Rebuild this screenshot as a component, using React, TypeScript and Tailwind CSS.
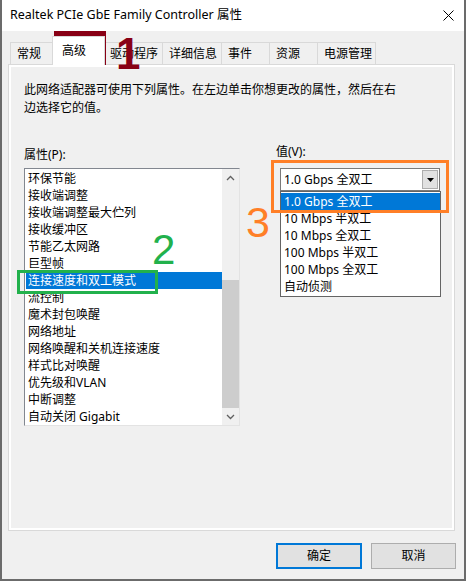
const tabs = [
  { label: "常规", w: "w-[44px]" },
  { label: "高级", w: "w-[53px]", sel: true },
  { label: "驱动程序", w: "w-[59px]" },
  { label: "详细信息", w: "w-[59px]" },
  { label: "事件", w: "w-[48px]" },
  { label: "资源", w: "w-[48px]" },
  { label: "电源管理", w: "w-[59px]" },
];

const props = [
  "环保节能",
  "接收端调整",
  "接收端调整最大伫列",
  "接收缓冲区",
  "节能乙太网路",
  "巨型帧",
  "连接速度和双工模式",
  "流控制",
  "魔术封包唤醒",
  "网络地址",
  "网络唤醒和关机连接速度",
  "样式比对唤醒",
  "优先级和VLAN",
  "中断调整",
  "自动关闭 Gigabit",
];

const speeds = ["1.0 Gbps 全双工", "10 Mbps 半双工", "10 Mbps 全双工", "100 Mbps 半双工", "100 Mbps 全双工", "自动侦测"];

function Chevron({ up }: { up?: boolean }) {
  return (
    <svg width="9" height="6" viewBox="0 0 9 6" className="text-[#606060]">
      <path d={up ? "M1 5 L4.5 1.5 L8 5" : "M1 1 L4.5 4.5 L8 1"} fill="none" stroke="currentColor" strokeWidth="1.3" />
    </svg>
  );
}

export default function App() {
  return (
    <div className="relative w-[468px] h-[581px] overflow-hidden bg-white text-black font-['Noto_Sans','Noto_Sans_CJK_SC',sans-serif] text-[12px]">
      <div className="flex flex-col w-[466px] h-[581px] border-x-2 border-b-2 border-[#6b6b6b] bg-[#f0f0f0]">
        {/* title bar */}
        <div className="flex items-center justify-between h-[31px] bg-white pl-[8px] pr-[10px]">
          <span className="text-[12.5px] leading-none">Realtek PCIe GbE Family Controller 属性</span>
          <svg width="11" height="11" viewBox="0 0 11 11">
            <path d="M0.5 0.5 L10.5 10.5 M10.5 0.5 L0.5 10.5" stroke="#000" strokeWidth="1" />
          </svg>
        </div>

        {/* tabs */}
        <div className="flex items-end h-[33px] pl-[8px]">
          {tabs.map((t) =>
            t.sel ? (
              <div
                key={t.label}
                className={`relative z-10 -mb-px -mx-[2px] h-[29px] ${t.w} bg-white border-x border-t border-[#d9d9d9] pl-[9px] pt-[5px] leading-[18px]`}
              >
                {t.label}
              </div>
            ) : (
              <div
                key={t.label}
                className={`h-[22px] ${t.w} border-t border-l last:border-r border-[#d9d9d9] pl-[6px] leading-[21px]`}
              >
                {t.label}
              </div>
            )
          )}
        </div>

        {/* panel */}
        <div className="ml-[6px] w-[447px] h-[467px] border border-[#d9d9d9]">
          <div className="h-full border-2 border-white pl-[13px] pt-[14px]">
            <p className="leading-[18px]">
              此网络适配器可使用下列属性。在左边单击你想更改的属性，然后在右
              <br />
              边选择它的值。
            </p>
            <div className="flex">
              <div className="w-[216px] pt-[29px]">
                <div className="leading-[18px] h-[18px]">属性(P):</div>
                <div className="mt-[4px] flex h-[258px] bg-white border border-t-[#828790] border-l-[#828790] border-r-[#e3e3e3] border-b-[#e3e3e3]">
                  <div className="flex-1 pt-[1px] pl-[1px]">
                    {props.map((p, i) => (
                      <div
                        key={p}
                        className={`h-[17px] leading-[17px] pl-[2px] whitespace-nowrap ${i === 6 ? "bg-[#0078d7] text-white" : ""}`}
                      >
                        {p}
                      </div>
                    ))}
                  </div>
                  <div className="w-[17px] flex flex-col bg-[#f0f0f0]">
                    <div className="h-[17px] flex items-center justify-center">
                      <Chevron up />
                    </div>
                    <div className="flex-1 flex flex-col justify-end">
                      <div className="h-[128px] bg-[#cdcdcd]" />
                    </div>
                    <div className="h-[17px] flex items-center justify-center">
                      <Chevron />
                    </div>
                  </div>
                </div>
              </div>

              <div className="ml-[36px] pt-[26px]">
                <div className="leading-[18px] h-[18px]">值(V):</div>
                <div className="mt-[7px] ml-[4px] w-[160px] h-[23px] flex items-center justify-between bg-white border border-[#7a7a7a]">
                  <span className="pl-[3px] leading-[17px]">1.0 Gbps 全双工</span>
                  <div className="mr-px w-[16px] h-[19px] flex items-center justify-center bg-[#e1e1e1] border border-[#adadad]">
                    <svg width="7" height="4" viewBox="0 0 7 4">
                      <path d="M0 0 H7 L3.5 4 Z" fill="#000" />
                    </svg>
                  </div>
                </div>
                <div className="ml-[4px] w-[161px] h-[106px] bg-white border border-[#646464] pt-[1px]">
                  {speeds.map((s, i) => (
                    <div
                      key={s}
                      className={`h-[17px] leading-[17px] pl-[3px] ${i === 0 ? "bg-[#0078d7] text-white" : ""}`}
                    >
                      {s}
                    </div>
                  ))}
                </div>
              </div>
            </div>
          </div>
        </div>

        {/* buttons */}
        <div className="flex justify-end gap-[9px] pr-[8px] mt-[12px]">
          <button className="w-[86px] h-[26px] bg-[#e1e1e1] border-2 border-[#0078d7] leading-none">确定</button>
          <button className="w-[85px] h-[26px] bg-[#e1e1e1] border border-[#adadad] leading-none">取消</button>
        </div>
      </div>

      {/* annotations */}
      <div className="absolute left-[54px] top-[31px] w-[52px] h-[34px] border-[5px] border-[#880015]" />
      <div className="absolute left-[116px] top-[32px] text-[44px] leading-none font-bold text-[#880015] font-['Liberation_Sans',sans-serif]">
        1
      </div>
      <div className="absolute left-[17px] top-[270px] w-[141px] h-[24px] border-[3px] border-[#22b14c]" />
      <div className="absolute left-[152px] top-[229px] text-[42px] leading-none text-[#22b14c] font-['Liberation_Sans',sans-serif]">
        2
      </div>
      <div className="absolute left-[271px] top-[160px] w-[178px] h-[53px] border-[3px] border-[#ff7f27]" />
      <div className="absolute left-[246px] top-[201px] text-[43px] leading-none text-[#ff7f27] font-['Liberation_Sans',sans-serif]">
        3
      </div>
    </div>
  );
}
